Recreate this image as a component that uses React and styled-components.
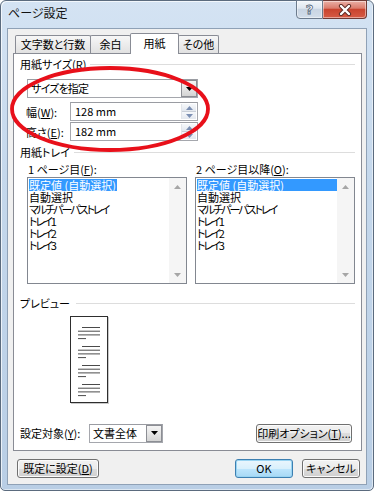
import React from "react";
import styled, { createGlobalStyle } from "styled-components";

const FONT = `"Noto Sans CJK JP", "Noto Sans", "DejaVu Sans", sans-serif`;

const Global = createGlobalStyle`
  html, body { margin: 0; padding: 0; }
  body {
    width: 374px; height: 491px; overflow: hidden; background: #fff;
    font-family: ${FONT};
    font-feature-settings: "palt";
    color: #000;
  }
  u { text-decoration-thickness: 1px; text-underline-offset: 1px; }
`;

const Window = styled.div`
  position: relative;
  box-sizing: border-box;
  width: 374px;
  height: 491px;
  border: 1px solid #5b6b7e;
  border-radius: 6px 6px 5px 5px;
  background: linear-gradient(180deg, #d4e3f3 0%, #c5d8ec 35%, #b9cee5 100%);
  box-shadow: inset 1px 1px 0 rgba(255,255,255,0.7), inset -1px -1px 0 rgba(255,255,255,0.5);
  display: flex;
  flex-direction: column;
  padding: 0 6px 5px 6px;
`;

const TitleBar = styled.div`
  height: 27px;
  display: flex;
  align-items: flex-start;
`;

const Title = styled.div`
  margin: 5px 0 0 1px;
  font-size: 12px;
  line-height: 14px;
  color: #111;
  flex: 1;
`;

const CaptionButton = styled.div`
  box-sizing: border-box;
  width: ${p => p.$w}px;
  height: 19px;
  margin-top: -1px;
  display: flex;
  align-items: center;
  justify-content: center;
  border: 1px solid ${p => (p.$close ? "#6f3a35" : "#6c7b8d")};
  border-left-width: ${p => (p.$close ? 0 : 1)}px;
  border-radius: ${p => (p.$close ? "0 0 4px 0" : "0 0 0 4px")};
  background: ${p =>
    p.$close
      ? "linear-gradient(180deg, #eab0a6 0%, #db7c6d 42%, #c9442f 50%, #d65b45 100%)"
      : "linear-gradient(180deg, #f2f6fa 0%, #dfe7f0 42%, #c9d5e3 50%, #d3deea 100%)"};
  box-shadow: inset 0 0 0 1px rgba(255,255,255,0.45);
`;

const HelpGlyph = styled.span`
  font-family: "DejaVu Sans", sans-serif;
  font-weight: bold;
  font-size: 13px;
  line-height: 13px;
  color: #fff;
  -webkit-text-stroke: 0.8px #55667a;
`;

const Client = styled.div`
  flex: 1;
  box-sizing: border-box;
  border: 1px solid #8fa1b6;
  background: #f0f0f0;
  display: flex;
  flex-direction: column;
  padding: 0 4px 6px 5px;
`;

const TabRow = styled.div`
  position: relative;
  z-index: 1;
  height: 25px;
  margin-bottom: -1px;
  padding-left: 2px;
  display: flex;
  align-items: flex-end;
`;

const Tab = styled.div`
  position: relative;
  z-index: ${p => (p.$active ? 2 : 1)};
  box-sizing: border-box;
  width: ${p => p.$w}px;
  height: ${p => (p.$active ? 21 : 18)}px;
  margin-bottom: ${p => (p.$active ? 0 : 1)}px;
  margin-left: ${p => (p.$first ? 0 : -1)}px;
  border: 1px solid #898c95;
  border-bottom: none;
  border-radius: 2px 2px 0 0;
  background: ${p => (p.$active ? "#fff" : "linear-gradient(180deg, #f7f7f7 0%, #ececec 50%, #e1e1e1 100%)")};
  display: flex;
  align-items: center;
  justify-content: center;
  padding-bottom: ${p => (p.$active ? 2 : 0)}px;
  font-size: 11px;
  line-height: 13px;
  white-space: nowrap;
`;

const Panel = styled.div`
  box-sizing: border-box;
  height: 398px;
  border: 1px solid #898c95;
  background: #fff;
  display: flex;
  flex-direction: column;
  padding: 3px 6px 7px 6px;
`;

const Heading = styled.div`
  display: flex;
  align-items: center;
  height: 14px;
  margin-top: ${p => p.$mt || 0}px;
  font-size: 11px;
  line-height: 14px;
  white-space: nowrap;
  &::after {
    content: "";
    flex: 1;
    height: 1px;
    margin-left: ${p => p.$gap || 4}px;
    background: #dddddd;
  }
`;

const Combo = styled.div`
  box-sizing: border-box;
  width: ${p => p.$w}px;
  height: ${p => p.$h || 19}px;
  margin-top: ${p => p.$mt || 0}px;
  margin-left: ${p => p.$ml || 0}px;
  border: 1px solid #a5a7ad;
  border-top-color: #9a9ca2;
  background: #fff;
  display: flex;
  align-items: stretch;
`;

const ComboText = styled.div`
  flex: 1;
  padding-left: ${p => p.$pl || 3}px;
  font-size: 11px;
  line-height: 17px;
  white-space: nowrap;
  letter-spacing: ${p => p.$ls || 0}px;
`;

const DropButton = styled.div`
  box-sizing: border-box;
  width: 16px;
  margin: 0;
  border: 1px solid #8c8e94;
  background: linear-gradient(180deg, #f4f4f4 0%, #e6e6e6 50%, #d4d4d4 100%);
  display: flex;
  align-items: center;
  justify-content: center;
`;

const FieldRow = styled.div`
  display: flex;
  align-items: center;
  height: 19px;
  margin-top: ${p => p.$mt}px;
  margin-left: 6px;
`;

const FieldLabel = styled.div`
  width: ${p => p.$w}px;
  font-size: 11px;
  line-height: 14px;
  white-space: nowrap;
`;

const SpinBox = styled.div`
  width: 14px;
  margin: 1px 1px 1px 0;
  display: flex;
  flex-direction: column;
  border-left: 1px solid #e2e5ea;
`;

const SpinHalf = styled.div`
  flex: 1;
  display: flex;
  align-items: center;
  justify-content: center;
  background: linear-gradient(180deg, #f6f8fb 0%, #e3e8ef 100%);
  border-top: ${p => (p.$down ? "1px solid #c9cfd8" : "none")};
`;

const Columns = styled.div`
  display: flex;
  gap: 8px;
  margin-top: 3px;
  margin-left: 7px;
`;

const Column = styled.div`
  width: 160px;
  display: flex;
  flex-direction: column;
`;

const ColumnLabel = styled.div`
  height: 14px;
  font-size: 11px;
  line-height: 14px;
  margin-left: 1px;
  white-space: nowrap;
`;

const ListBox = styled.div`
  box-sizing: border-box;
  height: 107px;
  margin-top: 1px;
  border: 1px solid #828790;
  background: #fff;
  display: flex;
`;

const ListItems = styled.div`
  flex: 1;
  padding: 1px 0 0 1px;
  display: flex;
  flex-direction: column;
  align-items: flex-start;
`;

const ListItem = styled.div`
  align-self: ${p => (p.$fill ? "stretch" : "flex-start")};
  height: 12px;
  font-size: 11px;
  line-height: 12px;
  padding-right: 1px;
  white-space: nowrap;
  letter-spacing: ${p => (p.$narrow ? -2 : 0)}px;
  background: ${p => (p.$sel ? "#3399ff" : "transparent")};
  color: ${p => (p.$sel ? "#fff" : "#000")};
`;

const ScrollBar = styled.div`
  width: 17px;
  background: #f5f5f5;
  display: flex;
  flex-direction: column;
  justify-content: space-between;
`;

const ScrollArrow = styled.div`
  height: 17px;
  display: flex;
  align-items: center;
  justify-content: center;
`;

const PreviewPage = styled.div`
  box-sizing: border-box;
  width: 38px;
  height: 87px;
  margin-top: 6px;
  margin-left: 50px;
  border: 1px solid #2e2e2e;
  background: #fff;
  box-shadow: 1px 1px 0 #c8c8c8;
`;

const BottomRow = styled.div`
  margin-top: auto;
  display: flex;
  align-items: center;
  height: 20px;
`;

const WinButton = styled.div`
  box-sizing: border-box;
  width: ${p => p.$w}px;
  height: 19px;
  margin-left: ${p => p.$ml || 0}px;
  margin-right: ${p => p.$mr || 0}px;
  border: 1px solid ${p => (p.$focus ? "#3c7fb1" : "#707070")};
  border-radius: 3px;
  background: ${p =>
    p.$focus
      ? "linear-gradient(180deg, #eaf6fd 0%, #d9f0fc 50%, #bee6fd 50%, #a7d9f5 100%)"
      : "linear-gradient(180deg, #f2f2f2 0%, #ebebeb 50%, #dddddd 50%, #cfcfcf 100%)"};
  box-shadow: inset 0 0 0 1px ${p => (p.$focus ? "#99d4f2" : "#fbfbfb")};
  display: flex;
  align-items: center;
  justify-content: center;
  font-size: 11px;
  line-height: 13px;
  white-space: nowrap;
`;

const ButtonRow = styled.div`
  margin-top: 8px;
  display: flex;
  align-items: center;
  padding: 0 2px 0 4px;
`;

const Spacer = styled.div`
  flex: 1;
`;

const Annotation = styled.svg`
  position: absolute;
  left: -1px;
  top: -1px;
  width: 374px;
  height: 491px;
  pointer-events: none;
`;

const Tri = ({ dir = "down", color = "#000", w = 7, h = 4 }) => (
  <svg width={w} height={h} viewBox={`0 0 ${w} ${h}`}>
    {dir === "down" ? (
      <polygon points={`0,0 ${w},0 ${w / 2},${h}`} fill={color} />
    ) : (
      <polygon points={`0,${h} ${w},${h} ${w / 2},0`} fill={color} />
    )}
  </svg>
);

const Select = ({ w, mt, ml, text, ls }) => (
  <Combo $w={w} $mt={mt} $ml={ml}>
    <ComboText $ls={ls}>{text}</ComboText>
    <DropButton>
      <Tri />
    </DropButton>
  </Combo>
);

const Spinner = ({ label, value, mt }) => (
  <FieldRow $mt={mt}>
    <FieldLabel $w={44}>{label}</FieldLabel>
    <Combo $w={128}>
      <ComboText $pl={4}>{value}</ComboText>
      <SpinBox>
        <SpinHalf>
          <Tri dir="up" color="#7b8fb3" w={7} h={4} />
        </SpinHalf>
        <SpinHalf $down>
          <Tri dir="down" color="#7b8fb3" w={7} h={4} />
        </SpinHalf>
      </SpinBox>
    </Combo>
  </FieldRow>
);

const TRAYS = [
  { t: "既定値 (自動選択)" },
  { t: "自動選択" },
  { t: "マルチパーパストレイ", narrow: true },
  { t: "トレイ1", narrow: true },
  { t: "トレイ2", narrow: true },
  { t: "トレイ3", narrow: true },
];

const TrayList = ({ fill }) => (
  <ListBox>
    <ListItems>
      {TRAYS.map((item, i) => (
        <ListItem key={item.t} $sel={i === 0} $fill={fill && i === 0} $narrow={item.narrow}>
          {item.t}
        </ListItem>
      ))}
    </ListItems>
    <ScrollBar>
      <ScrollArrow>
        <Tri dir="up" color="#a6a6a6" w={7} h={4} />
      </ScrollArrow>
      <ScrollArrow>
        <Tri dir="down" color="#a6a6a6" w={7} h={4} />
      </ScrollArrow>
    </ScrollBar>
  </ListBox>
);

const PreviewLines = () => {
  const lines = [];
  for (let g = 0; g < 4; g++) {
    const y0 = 10.5 + g * 19;
    lines.push(<line key={`${g}a`} x1="11" x2="29" y1={y0} y2={y0} />);
    lines.push(<line key={`${g}b`} x1="7" x2="29" y1={y0 + 3.7} y2={y0 + 3.7} />);
    lines.push(<line key={`${g}c`} x1="7" x2="29" y1={y0 + 7.4} y2={y0 + 7.4} />);
    lines.push(<line key={`${g}d`} x1="7" x2="15" y1={y0 + 11.1} y2={y0 + 11.1} />);
  }
  return (
    <svg width="36" height="85" viewBox="0 0 36 85">
      <g stroke="#4a4a4a" strokeWidth="1">{lines}</g>
    </svg>
  );
};

export default function App() {
  return (
    <>
      <Global />
      <Window>
        <TitleBar>
          <Title>ページ設定</Title>
          <CaptionButton $w={27}>
            <HelpGlyph>?</HelpGlyph>
          </CaptionButton>
          <CaptionButton $w={44} $close>
            <svg width="14" height="12" viewBox="0 0 14 12">
              <g strokeLinecap="round">
                <path d="M3 2 L11 10 M11 2 L3 10" stroke="#5a2a24" strokeWidth="4.2" />
                <path d="M3 2 L11 10 M11 2 L3 10" stroke="#ffffff" strokeWidth="2.4" />
              </g>
            </svg>
          </CaptionButton>
        </TitleBar>
        <Client>
          <TabRow>
            <Tab $w={76} $first>文字数と行数</Tab>
            <Tab $w={41}>余白</Tab>
            <Tab $w={49} $active>用紙</Tab>
            <Tab $w={41}>その他</Tab>
          </TabRow>
          <Panel>
            <Heading>
              用紙サイズ(<u>R</u>)
            </Heading>
            <Select w={171} mt={8} ml={7} text="サイズを指定" ls={-0.8} />
            <Spinner label={<>幅(<u>W</u>):</>} value="128 mm" mt={4} />
            <Spinner label={<>高さ(<u>E</u>):</>} value="182 mm" mt={1} />
            <Heading $mt={4}>用紙トレイ</Heading>
            <Columns>
              <Column>
                <ColumnLabel>
                  1 ページ目(<u>F</u>):
                </ColumnLabel>
                <TrayList fill={false} />
              </Column>
              <Column>
                <ColumnLabel>
                  2 ページ目以降(<u>O</u>):
                </ColumnLabel>
                <TrayList fill />
              </Column>
            </Columns>
            <Heading $mt={12} $gap={6}>プレビュー</Heading>
            <PreviewPage>
              <PreviewLines />
            </PreviewPage>
            <BottomRow>
              <FieldLabel $w={69}>
                設定対象(<u>Y</u>):
              </FieldLabel>
              <Select w={74} text="文書全体" />
              <Spacer />
              <WinButton $w={96} $mr={3}>
                印刷オプション(<u>T</u>)...
              </WinButton>
            </BottomRow>
          </Panel>
          <ButtonRow>
            <WinButton $w={82}>
              既定に設定(<u>D</u>)
            </WinButton>
            <Spacer />
            <WinButton $w={58} $focus>
              OK
            </WinButton>
            <WinButton $w={58} $ml={9}>
              キャンセル
            </WinButton>
          </ButtonRow>
        </Client>
        <Annotation viewBox="0 0 374 491">
          <ellipse cx="110" cy="109" rx="98" ry="41" fill="none" stroke="#e8101a" strokeWidth="3.8" />
        </Annotation>
      </Window>
    </>
  );
}
